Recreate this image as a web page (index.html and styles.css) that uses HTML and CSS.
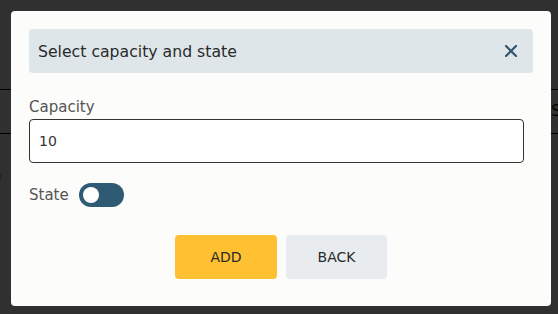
FILE: index.html
```html
<!DOCTYPE html>
<html lang="en">
<head>
    <meta charset="UTF-8">
    <meta name="viewport" content="width=device-width, initial-scale=1.0">
    <title>Select capacity and state</title>
    <link rel="stylesheet" href="styles.css">
</head>
<body>
    <div class="page">
        <div class="page-head"><span class="cell-right">Se</span></div>
        <div class="page-row"><span class="cell-left">e</span><span class="cell-right">ki</span></div>
    </div>

    <div class="overlay">
        <div class="modal">
            <div class="modal-header">
                <span class="modal-title">Select capacity and state</span>
                <button class="close-btn" aria-label="Close">
                    <svg width="12" height="12" viewBox="0 0 12 12">
                        <path d="M1 1 L11 11 M11 1 L1 11" stroke="#2f5470" stroke-width="2.2" stroke-linecap="square" fill="none"/>
                    </svg>
                </button>
            </div>

            <label class="field-label" for="capacity">Capacity</label>
            <input class="field-input" type="text" id="capacity" value="10">

            <div class="state-row">
                <span class="state-label">State</span>
                <span class="toggle"><span class="knob"></span></span>
            </div>

            <div class="actions">
                <button class="btn btn-add">ADD</button>
                <button class="btn btn-back">BACK</button>
            </div>
        </div>
    </div>
</body>
</html>
```

FILE: styles.css
```css
* {
    margin: 0;
    padding: 0;
    box-sizing: border-box;
}

body {
    font-family: "DejaVu Sans", sans-serif;
    background-color: #fff;
    color: #333;
    width: 558px;
    height: 314px;
    overflow: hidden;
}

.page {
    padding-top: 89px;
    font-size: 15px;
    color: #000;
}

.page-head {
    display: flex;
    justify-content: flex-end;
    height: 45px;
    line-height: 43px;
    border-top: 1px solid #000;
    border-bottom: 1px solid #000;
}

.page-row {
    display: flex;
    justify-content: space-between;
    padding-top: 32px;
    line-height: 20px;
}

.cell-left {
    margin-left: -8px;
}

.cell-right {
    margin-right: -12px;
}

.overlay {
    position: fixed;
    top: 0;
    left: 0;
    width: 100%;
    height: 100%;
    background-color: rgba(0, 0, 0, 0.81);
    padding: 11px 7px 8px 11px;
}

.modal {
    width: 540px;
    height: 295px;
    background-color: #fcfcfa;
    border-radius: 4px;
    padding: 18px;
}

.modal-header {
    display: flex;
    align-items: center;
    justify-content: space-between;
    height: 44px;
    padding: 0 16px 0 9px;
    background-color: #dfe6ea;
    border-radius: 4px;
}

.modal-title {
    font-size: 15.7px;
    color: #2a2a2a;
}

.close-btn {
    display: flex;
    background: none;
    border: none;
    cursor: pointer;
}

.field-label {
    display: block;
    margin-top: 22px;
    font-size: 15px;
    color: #555;
    line-height: 24px;
}

.field-input {
    display: block;
    width: calc(100% - 9px);
    height: 44px;
    padding: 0 9px;
    border: 1px solid #333;
    border-radius: 4px;
    background-color: #fff;
    font-family: inherit;
    font-size: 14px;
    color: #333;
    outline: none;
}

.state-row {
    display: flex;
    align-items: center;
    gap: 10px;
    margin-top: 20px;
    height: 24px;
}

.state-label {
    font-size: 15px;
    color: #555;
}

.toggle {
    display: flex;
    align-items: center;
    width: 45px;
    height: 24px;
    padding-left: 4px;
    border-radius: 12px;
    background-color: #2f5a74;
}

.knob {
    width: 16px;
    height: 16px;
    border-radius: 50%;
    background-color: #fff;
}

.actions {
    display: flex;
    justify-content: center;
    gap: 9px;
    margin-top: 28px;
}

.btn {
    width: 102px;
    height: 44px;
    border: none;
    border-radius: 4px;
    font-family: inherit;
    font-size: 14px;
    color: #2a2a2a;
    cursor: pointer;
}

.btn-add {
    background-color: #ffc132;
}

.btn-back {
    width: 101px;
    background-color: #e8ecee;
}
```
